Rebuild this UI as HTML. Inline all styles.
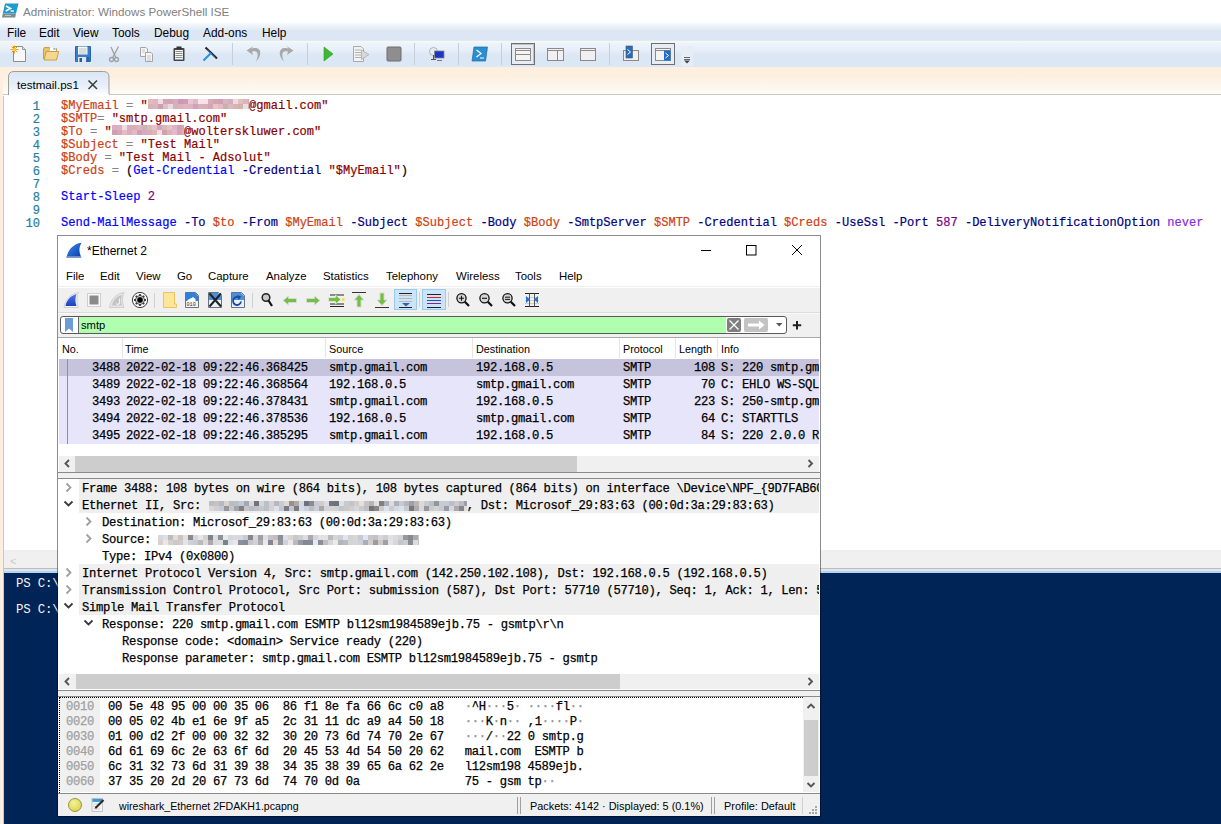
<!DOCTYPE html>
<html><head><meta charset="utf-8">
<style>
*{margin:0;padding:0;box-sizing:border-box}
html,body{width:1221px;height:824px;overflow:hidden;background:#fff;font-family:"Liberation Sans",sans-serif;position:relative}
.a{position:absolute;white-space:pre}
.mono{font-family:"Liberation Mono",monospace;-webkit-text-stroke:0.25px currentColor}
/* ISE */
#title{left:0;top:0;width:1221px;height:22px;background:#fff}
#menubar{left:0;top:22px;width:1221px;height:20px;background:linear-gradient(#fdfeff 0,#f0f5fb 3px,#dde7f4 9px,#dce6f4 18px,#e8efe8 19px)}
#toolbar{left:0;top:41px;width:1221px;height:27px;background:linear-gradient(#f6fbf7 0,#eef4fb 2px,#e9f0f9 8px,#dce7f5 14px,#dce7f5 25px,#e0eaf6 27px)}
#tabstrip{left:0;top:67px;width:1221px;height:27px;background:linear-gradient(#fdefdf 0,#fdf0e1 10px,#fefbf6 27px)}
#edline{left:3px;top:94px;width:1221px;height:1px;background:#c9c9c9}
#editor{left:4px;top:95px;width:1217px;height:455px;background:#fff}
#leftstrip{left:0;top:67px;width:3px;height:757px;background:#fdefdf}
#leftborder{left:3px;top:96px;width:1px;height:728px;background:#c8c8c8}
.ln{color:#1f7fa0}
.code{font-family:"Liberation Mono",monospace;font-size:12.06px;line-height:13px;-webkit-text-stroke:0.2px currentColor}
.v{color:#cc4214}
.s{color:#8b0000}
.c{color:#0000ff}
.p{color:#000080}
.n{color:#800080}
.k{color:#8a2be2}
.g{color:#909090}
#hscroll{left:4px;top:550px;width:1217px;height:18px;background:#f0f0f0}
#split{left:4px;top:568px;width:1217px;height:5px;background:linear-gradient(#c4beb6 0,#c4beb6 1px,#dce6ee 1px,#dce6ee 3px,#b4d4f4 3px,#b4d4f4 5px)}
#console{left:4px;top:573px;width:1217px;height:251px;background:#012456}
</style></head><body>
<div class="a" id="title"></div>
<div class="a" id="menubar"></div>
<div class="a" id="toolbar"></div>
<div class="a" id="tabstrip"></div>
<div class="a" id="edline"></div>
<div class="a" id="editor"></div>
<div class="a" id="leftstrip"></div>
<div class="a" id="leftborder"></div>
<div class="a" id="hscroll"></div>
<div class="a" id="split"></div>
<div class="a" id="console"></div>

<!-- title -->
<svg class="a" style="left:2px;top:3px" width="17" height="16" viewBox="0 0 17 16">
<path d="M3 0.5 H16.5 L14 10.5 H0.8 Z" fill="#1e9bcb"/>
<path d="M0.8 10.5 H14 L13.2 14.5 H0 Z" fill="#7c8a92"/>
<path d="M4 3 L8.5 5.5 L3.8 8" stroke="#fff" stroke-width="1.6" fill="none"/>
<path d="M8.5 8 H12" stroke="#fff" stroke-width="1.3"/>
<path d="M3 12.5 H9" stroke="#bdc6cc" stroke-width="1"/>
</svg>
<div class="a" style="left:23px;top:5px;font-size:11.65px;color:#808080">Administrator: Windows PowerShell ISE</div>


<!-- ISE menu -->
<div class="a" style="left:7px;top:25.5px;font-size:11.9px;color:#000">File</div>
<div class="a" style="left:39px;top:25.5px;font-size:11.9px;color:#000">Edit</div>
<div class="a" style="left:73px;top:25.5px;font-size:11.9px;color:#000">View</div>
<div class="a" style="left:112px;top:25.5px;font-size:11.9px;color:#000">Tools</div>
<div class="a" style="left:154px;top:25.5px;font-size:11.9px;color:#000">Debug</div>
<div class="a" style="left:203px;top:25.5px;font-size:11.9px;color:#000">Add-ons</div>
<div class="a" style="left:262px;top:25.5px;font-size:11.9px;color:#000">Help</div>

<!-- ISE toolbar icons -->
<svg class="a" style="left:0;top:41px" width="700" height="27" viewBox="0 41 700 27">
 <!-- new -->
 <path d="M13.5 46.5 H22.5 L25.5 49.5 V61.5 H13.5 Z" fill="#f8f8f8" stroke="#8c8c8c"/>
 <path d="M22.5 46.5 V49.5 H25.5" fill="#e0e0e0" stroke="#9a9a9a"/>
 <g stroke="#f8a010" stroke-width="1"><path d="M14.5 45.5 V53.5 M10.5 49.5 H18.5 M11.7 46.7 L17.3 52.3 M17.3 46.7 L11.7 52.3"/></g>
 <circle cx="14.5" cy="49.5" r="1.5" fill="#ffd040"/>
 <!-- open -->
 <path d="M43.5 58.5 V49 Q43.5 47.5 45 47.5 H49 L50.5 48.5 H56.5 V59.5 Z" fill="#e6c36a" stroke="#c49a3e" stroke-width="0.9"/>
 <rect x="50" y="48" width="6" height="3" fill="#fff"/>
 <rect x="53.5" y="48.3" width="2" height="1.2" fill="#3a8ae0"/>
 <path d="M44 60 L46.2 51.5 H58.7 L56.5 60 Z" fill="#f3d88e" stroke="#c49a3e" stroke-width="0.9"/>
 <!-- save -->
 <rect x="75" y="46" width="16" height="16" rx="1" fill="#3a7cc8"/>
 <rect x="75.5" y="46.5" width="15" height="15" rx="1" fill="none" stroke="#2a64a8" stroke-width="1"/>
 <rect x="78" y="46.5" width="9.5" height="8" fill="#f6f6f6"/>
 <path d="M79 49 H86.5 M79 51 H86.5 M79 53 H86.5" stroke="#a8b0b8" stroke-width="0.7"/>
 <rect x="78" y="57" width="8" height="5" fill="#e6e6e6"/>
 <rect x="79.5" y="58" width="2.5" height="4" fill="#2a5a98"/>
 <rect x="87" y="57" width="2.5" height="4" fill="#2a64a8"/>
 <!-- cut gray -->
 <g stroke="#a0a0a0" stroke-width="1.3" fill="none"><path d="M118.5 46.5 L112.5 58 M111 47 L116 58"/><circle cx="111.5" cy="59.5" r="2"/><circle cx="116.5" cy="59.5" r="2"/></g>
 <!-- copy gray -->
 <path d="M140.5 47.5 H146 L147.5 49 V56.5 H140.5 Z" fill="#f5f5f5" stroke="#a5a5a5"/>
 <path d="M145.5 52.5 H151 L152.5 54 V61.5 H145.5 Z" fill="#f5f5f5" stroke="#a5a5a5"/>
 <path d="M147 56 H151 M147 58 H151 M147 60 H151 M142 50 H145 M142 52 H145" stroke="#b5b5b5" stroke-width="0.7"/>
 <!-- paste clipboard -->
 <rect x="173.5" y="48" width="11" height="13" rx="1" fill="#444"/>
 <rect x="175" y="50" width="8" height="9.5" fill="#f4f4f4"/>
 <rect x="176.5" y="46.5" width="5" height="2.5" fill="#333"/>
 <path d="M175.5 51.5 H182.5 M175.5 53.5 H182.5 M175.5 55.5 H182.5 M175.5 57.5 H182.5" stroke="#777" stroke-width="0.8"/>
 <!-- squeegee -->
 <path d="M205.5 47.5 L217 58.5" stroke="#222" stroke-width="2"/>
 <path d="M211 53 L203.5 60.5" stroke="#2a8ee0" stroke-width="2"/>
 <path d="M207 49.5 L215 57.5" stroke="#2a8ee0" stroke-width="1"/>
 <!-- sep -->
 <path d="M232.5 43 V65" stroke="#c5cfdc"/>
 <!-- undo gray -->
 <path d="M256 61.5 C262 56 262 47 254 48 L251.5 48.5 L253.5 46 L246.5 50.5 L253 55 L252 51.5 L254 51.2 C258.5 51 258.5 56 256 61.5Z" fill="#a9a9a9"/>
 <!-- redo gray -->
 <path d="M284 61.5 C278 56 278 47 286 48 L288.5 48.5 L286.5 46 L293.5 50.5 L287 55 L288 51.5 L286 51.2 C281.5 51 281.5 56 284 61.5Z" fill="#a9a9a9"/>
 <path d="M307.5 43 V65" stroke="#c5cfdc"/>
 <!-- run -->
 <path d="M324 47 L333 54 L324 61 Z" fill="#3cb832" stroke="#2a9a22" stroke-width="0.6"/>
 <!-- run selection -->
 <path d="M353.5 46.5 H361 L363.5 49 V61.5 H353.5 Z" fill="#f3f3f3" stroke="#a8a8a8"/>
 <path d="M355 50 H361 M355 52.5 H361 M355 55 H361 M355 57.5 H361" stroke="#a0a0a0" stroke-width="0.8"/>
 <path d="M361.5 50 L369 54.5 L361.5 59.5 Z" fill="#d8d8d8" stroke="#a5a5a5" stroke-width="0.7"/>
 <!-- stop -->
 <rect x="387" y="47" width="14" height="14" rx="1" fill="#8e8e8e" stroke="#6e6e6e"/>
 <path d="M414.5 43 V65" stroke="#c5cfdc"/>
 <!-- remote -->
 <circle cx="433.5" cy="51.5" r="4" fill="#e6eef2" stroke="#9aa8b0" stroke-width="0.8"/>
 <path d="M433.5 55 V59 M431 59.5 H436" stroke="#555" stroke-width="1"/>
 <rect x="434.5" y="51" width="9.5" height="7" fill="#1a34c8" stroke="#888" stroke-width="0.8"/>
 <path d="M437 60.5 H442" stroke="#777" stroke-width="1"/>
 <path d="M458.5 43 V65" stroke="#c5cfdc"/>
 <!-- PS -->
 <path d="M474 47 H487.5 L485.5 61 H472 Z" fill="#2a8fd0" stroke="#1a6aa8" stroke-width="0.7"/>
 <path d="M476.5 50 L481 53.5 L476.5 57" stroke="#fff" stroke-width="1.3" fill="none"/>
 <path d="M480 58 H484" stroke="#fff" stroke-width="1"/>
 <path d="M501.5 43 V65" stroke="#c5cfdc"/>
 <!-- layout 1 pressed -->
 <rect x="511.5" y="43.5" width="23" height="21" fill="#e8edf3" stroke="#707070"/>
 <path d="M512.5 44.5 H533.5 V63.5" stroke="#c0c0c0" fill="none"/>
 <rect x="515.5" y="48.5" width="15" height="12" fill="#f4f4f4" stroke="#8a8a8a"/>
 <path d="M515.5 50.5 H530.5 M515.5 54.5 H530.5" stroke="#8a8a8a"/>
 <!-- layout 2 -->
 <rect x="547.5" y="48.5" width="16" height="12" fill="#f0f0f0" stroke="#8a8a8a"/>
 <path d="M547.5 50.5 H563.5 M557.5 50.5 V60.5" stroke="#8a8a8a"/>
 <!-- layout 3 -->
 <rect x="580.5" y="48.5" width="15" height="12" fill="#f0f0f0" stroke="#8a8a8a"/>
 <path d="M580.5 50.5 H595.5" stroke="#8a8a8a"/>
 <path d="M609.5 43 V65" stroke="#c5cfdc"/>
 <!-- show script pane top -->
 <rect x="623.5" y="50.5" width="15" height="10" fill="#f0f0f0" stroke="#8a8a8a"/>
 <rect x="626" y="46" width="6.5" height="12" fill="#1f6fc8" stroke="#555" stroke-width="0.6"/>
 <path d="M627.5 49.5 L630.5 52 L627.5 54.5" stroke="#fff" stroke-width="1" fill="none"/>
 <!-- pressed show script pane right -->
 <rect x="651.5" y="43.5" width="23" height="21" fill="#e8edf3" stroke="#707070"/>
 <rect x="655.5" y="48.5" width="15" height="12" fill="#f4f4f4" stroke="#8a8a8a"/>
 <path d="M655.5 50.5 H670.5" stroke="#8a8a8a"/>
 <rect x="664" y="50.5" width="6.5" height="10" fill="#1f6fc8"/>
 <path d="M665.5 53 L668.5 55.5 L665.5 58" stroke="#fff" stroke-width="1" fill="none"/>
 <!-- overflow -->
 <rect x="681" y="46" width="12" height="20" fill="#e6edf7"/>
 <path d="M684 57.5 H690 M684 59.5 H690" stroke="#444" stroke-width="0.8"/>
 <path d="M684 60.5 L687 63.5 L690 60.5 Z" fill="#444"/>
</svg>

<!-- tab -->
<svg class="a" style="left:8px;top:71px" width="102" height="24" viewBox="0 0 102 24">
 <defs><linearGradient id="tg" x1="0" y1="0" x2="0" y2="1"><stop offset="0" stop-color="#dce7f5"/><stop offset="0.55" stop-color="#e6eef8"/><stop offset="1" stop-color="#fcfdff"/></linearGradient></defs>
 <path d="M0.5 24 V6 Q0.5 0.5 6 0.5 H95.5 Q101 0.5 101 6 V24" fill="url(#tg)" stroke="#9d9d9d"/>
 <path d="M80.5 9.5 L89 18 M89 9.5 L80.5 18" stroke="#3c3c3c" stroke-width="1.5"/>
</svg>
<div class="a" style="left:17px;top:78px;font-size:11.6px;color:#000">testmail.ps1</div>
<div class="a" style="left:9px;top:94px;width:100px;height:1px;background:#fcfdff"></div>

<!-- code -->
<div class="a code ln" style="left:18px;top:101px;width:22px;text-align:right">1
2
3
4
5
6
7
8
9
10</div>
<div class="a code" style="left:61px;top:100px"><span class="v">$MyEmail</span> <span style="color:#858585">=</span> <span class="s">"<span style="color:transparent">xxxxxxxxxxxxxx</span>@gmail.com"</span>
<span class="v">$SMTP</span><span style="color:#858585">=</span> <span class="s">"smtp.gmail.com"</span>
<span class="v">$To</span> <span style="color:#858585">=</span> <span class="s">"<span style="color:transparent">xxxxxxxxxx</span>@wolterskluwer.com"</span>
<span class="v">$Subject</span> <span style="color:#858585">=</span> <span class="s">"Test Mail"</span>
<span class="v">$Body</span> <span style="color:#858585">=</span> <span class="s">"Test Mail - Adsolut"</span>
<span class="v">$Creds</span> <span style="color:#858585">=</span> (<span class="c">Get-Credential</span> <span class="p">-Credential</span> <span class="s">"$MyEmail"</span>)

<span class="c">Start-Sleep</span> <span class="n">2</span>

<span class="c">Send-MailMessage</span> <span class="p">-To</span> <span class="v">$to</span> <span class="p">-From</span> <span class="v">$MyEmail</span> <span class="p">-Subject</span> <span class="v">$Subject</span> <span class="p">-Body</span> <span class="v">$Body</span> <span class="p">-SmtpServer</span> <span class="v">$SMTP</span> <span class="p">-Credential</span> <span class="v">$Creds</span> <span class="p">-UseSsl</span> <span class="p">-Port</span> <span class="n">587</span> <span class="p">-DeliveryNotificationOption</span> <span class="k">never</span></div>
<!-- blur blocks -->
<svg class="a" style="left:148px;top:99px" width="101" height="10" viewBox="0 0 101 10" shape-rendering="crispEdges"><rect x="0" y="0" width="5" height="5" fill="#e4bbbc"/><rect x="5" y="0" width="5" height="5" fill="#e4b2c2"/><rect x="10" y="0" width="5" height="5" fill="#efdde3"/><rect x="15" y="0" width="5" height="5" fill="#d4a2c1"/><rect x="20" y="0" width="5" height="5" fill="#d0a7af"/><rect x="25" y="0" width="5" height="5" fill="#d9aac4"/><rect x="30" y="0" width="5" height="5" fill="#cd98b5"/><rect x="35" y="0" width="5" height="5" fill="#d29cb4"/><rect x="40" y="0" width="5" height="5" fill="#e6c6d0"/><rect x="45" y="0" width="5" height="5" fill="#dbb9c5"/><rect x="50" y="0" width="5" height="5" fill="#f5e3e9"/><rect x="55" y="0" width="5" height="5" fill="#f4e2e8"/><rect x="60" y="0" width="5" height="5" fill="#d2afb7"/><rect x="65" y="0" width="5" height="5" fill="#d3a4ac"/><rect x="70" y="0" width="5" height="5" fill="#d29eba"/><rect x="75" y="0" width="5" height="5" fill="#d9b2c7"/><rect x="80" y="0" width="5" height="5" fill="#d2b0b8"/><rect x="85" y="0" width="5" height="5" fill="#ecdae0"/><rect x="90" y="0" width="5" height="5" fill="#dfc1ba"/><rect x="95" y="0" width="5" height="5" fill="#d7b7bc"/><rect x="100" y="0" width="1" height="5" fill="#d6a9ae"/><rect x="0" y="5" width="5" height="5" fill="#dcafb4"/><rect x="5" y="5" width="5" height="5" fill="#d5b7b8"/><rect x="10" y="5" width="5" height="5" fill="#cd9eae"/><rect x="15" y="5" width="5" height="5" fill="#dfc1bf"/><rect x="20" y="5" width="5" height="5" fill="#ead8de"/><rect x="25" y="5" width="5" height="5" fill="#d3b2ba"/><rect x="30" y="5" width="5" height="5" fill="#dbb2b9"/><rect x="35" y="5" width="5" height="5" fill="#ddb7bd"/><rect x="40" y="5" width="5" height="5" fill="#e4aec7"/><rect x="45" y="5" width="5" height="5" fill="#cea3ba"/><rect x="50" y="5" width="5" height="5" fill="#ddacc0"/><rect x="55" y="5" width="5" height="5" fill="#d7b1af"/><rect x="60" y="5" width="5" height="5" fill="#d6a3ba"/><rect x="65" y="5" width="5" height="5" fill="#e6c6c0"/><rect x="70" y="5" width="5" height="5" fill="#e3bcc2"/><rect x="75" y="5" width="5" height="5" fill="#ceaea9"/><rect x="80" y="5" width="5" height="5" fill="#d9bac0"/><rect x="85" y="5" width="5" height="5" fill="#d8b2b8"/><rect x="90" y="5" width="5" height="5" fill="#d1b2ab"/><rect x="95" y="5" width="5" height="5" fill="#efdde3"/><rect x="100" y="5" width="1" height="5" fill="#d3b1af"/></svg>
<svg class="a" style="left:112px;top:125px" width="72" height="10" viewBox="0 0 72 10" shape-rendering="crispEdges"><rect x="0" y="0" width="5" height="5" fill="#e1aac2"/><rect x="5" y="0" width="5" height="5" fill="#dab1c4"/><rect x="10" y="0" width="5" height="5" fill="#eedce2"/><rect x="15" y="0" width="5" height="5" fill="#dbaac4"/><rect x="20" y="0" width="5" height="5" fill="#dbaeb3"/><rect x="25" y="0" width="5" height="5" fill="#dcb6c1"/><rect x="30" y="0" width="5" height="5" fill="#d1b0b3"/><rect x="35" y="0" width="5" height="5" fill="#debbb8"/><rect x="40" y="0" width="5" height="5" fill="#e8c0d1"/><rect x="45" y="0" width="5" height="5" fill="#d5a7b2"/><rect x="50" y="0" width="5" height="5" fill="#d8b8bb"/><rect x="55" y="0" width="5" height="5" fill="#e2c3c7"/><rect x="60" y="0" width="5" height="5" fill="#e3b0c9"/><rect x="65" y="0" width="5" height="5" fill="#d59fad"/><rect x="70" y="0" width="2" height="5" fill="#d7a5c0"/><rect x="0" y="5" width="5" height="5" fill="#cda0aa"/><rect x="5" y="5" width="5" height="5" fill="#d7a4bd"/><rect x="10" y="5" width="5" height="5" fill="#e7b9c1"/><rect x="15" y="5" width="5" height="5" fill="#d8afbe"/><rect x="20" y="5" width="5" height="5" fill="#e4b9c7"/><rect x="25" y="5" width="5" height="5" fill="#d29eb2"/><rect x="30" y="5" width="5" height="5" fill="#d7a9c1"/><rect x="35" y="5" width="5" height="5" fill="#d2aeb5"/><rect x="40" y="5" width="5" height="5" fill="#dcb5b4"/><rect x="45" y="5" width="5" height="5" fill="#f2e0e6"/><rect x="50" y="5" width="5" height="5" fill="#d2a1ae"/><rect x="55" y="5" width="5" height="5" fill="#dab3b5"/><rect x="60" y="5" width="5" height="5" fill="#e8b6ce"/><rect x="65" y="5" width="5" height="5" fill="#cda9b6"/><rect x="70" y="5" width="2" height="5" fill="#e0aec9"/></svg>

<!-- ISE horizontal scroll area (left of wireshark) -->
<div class="a" style="left:10px;top:555px;font-size:11px;color:#c8c8c8">&lt;</div>
<!-- console text -->
<div class="a" style="left:16px;top:572px;font-family:'Liberation Mono',monospace;font-size:12.4px;letter-spacing:-0.2px;line-height:25.5px;color:#f5f5f5">PS C:\
PS C:\</div>


<!-- ================= WIRESHARK ================= -->
<div class="a" style="left:57px;top:235px;width:764px;height:582px;background:#f0f0f0;background-clip:padding-box;border:1px solid rgba(0,0,0,0.45)"></div>
<div class="a" style="left:58px;top:236px;width:762px;height:52px;background:#fff"></div>
<div class="a" style="left:58px;top:286px;width:762px;height:1px;background:#efefef"></div>
<!-- title -->
<svg class="a" style="left:66px;top:242px" width="17" height="17" viewBox="0 0 17 17">
 <defs><linearGradient id="sh" x1="0" y1="0" x2="1" y2="1"><stop offset="0" stop-color="#3d8bf0"/><stop offset="1" stop-color="#0a3aa8"/></linearGradient></defs>
 <path d="M0.5 15.5 C2 8 7 2 15.5 0.8 C13 5 12.5 10 15.5 15.5 Z" fill="url(#sh)"/>
 <path d="M0.5 14 H15 V16 H0.5Z" fill="#7d9bc8" opacity="0.8"/>
</svg>
<div class="a" style="left:87px;top:244px;font-size:12px;color:#000">*Ethernet 2</div>
<svg class="a" style="left:690px;top:240px" width="120" height="20" viewBox="690 240 120 20">
 <path d="M701 250.5 H711" stroke="#000" stroke-width="1"/>
 <rect x="746.5" y="245.5" width="9.5" height="9.5" fill="none" stroke="#000" stroke-width="1"/>
 <path d="M792 245 L802 255 M802 245 L792 255" stroke="#000" stroke-width="1"/>
</svg>
<!-- menu -->
<div class="a" style="left:66px;top:270px;font-size:11.4px;color:#000">File</div>
<div class="a" style="left:100px;top:270px;font-size:11.4px;color:#000">Edit</div>
<div class="a" style="left:136px;top:270px;font-size:11.4px;color:#000">View</div>
<div class="a" style="left:177px;top:270px;font-size:11.4px;color:#000">Go</div>
<div class="a" style="left:208px;top:270px;font-size:11.4px;color:#000">Capture</div>
<div class="a" style="left:266px;top:270px;font-size:11.4px;color:#000">Analyze</div>
<div class="a" style="left:323px;top:270px;font-size:11.4px;color:#000">Statistics</div>
<div class="a" style="left:386px;top:270px;font-size:11.4px;color:#000">Telephony</div>
<div class="a" style="left:456px;top:270px;font-size:11.4px;color:#000">Wireless</div>
<div class="a" style="left:515px;top:270px;font-size:11.4px;color:#000">Tools</div>
<div class="a" style="left:559px;top:270px;font-size:11.4px;color:#000">Help</div>

<!-- wireshark toolbar -->
<svg class="a" style="left:58px;top:288px" width="500" height="24" viewBox="58 288 500 24">
 <defs>
  <linearGradient id="bl" x1="0" y1="0" x2="0" y2="1"><stop offset="0" stop-color="#4a7ae8"/><stop offset="1" stop-color="#1f3fc0"/></linearGradient>
 </defs>
 <!-- start shark -->
 <path d="M64 307.5 C65 300 70 294 78.5 292.5 C76.5 297 76.5 302 78.5 307.5 Z" fill="#f6f6f6" stroke="#c8c8c8" stroke-width="0.8"/>
 <path d="M65.5 306 C66.5 300 71 295.5 76.5 294 C75 298 75 302 76.5 306 Z" fill="url(#bl)"/>
 <!-- stop -->
 <rect x="87.5" y="293.5" width="13" height="13" fill="#fafafa" stroke="#cfcfcf"/>
 <rect x="89.5" y="295.5" width="9" height="9" fill="#8a8a8a"/>
 <!-- restart gray -->
 <path d="M109.5 307.5 C110.5 300 115.5 294 124 292.5 C122 297 122 302 124 307.5 Z" fill="#e6e6e6" stroke="#c8c8c8" stroke-width="0.8"/>
 <path d="M112 305.5 C113 300 117 296 122 295 C120.8 298.5 120.8 302 122 305.5 Z" fill="#c4c4c4"/>
 <path d="M119.5 298.5 V303 A2 2 0 0 1 116 303.5" stroke="#f4f4f4" stroke-width="1.2" fill="none"/>
 <!-- options gear -->
 <circle cx="140" cy="300" r="7.6" fill="#fff" stroke="#3a3a3a" stroke-width="1"/>
 <circle cx="140" cy="300" r="4.8" fill="#3a3a3a"/>
 <g stroke="#3a3a3a" stroke-width="1.8"><path d="M140 294 V306 M134 300 H146 M135.8 295.8 L144.2 304.2 M144.2 295.8 L135.8 304.2"/></g>
 <circle cx="140" cy="300" r="2.4" fill="#000"/>
 <circle cx="140" cy="300" r="3.6" fill="none" stroke="#fff" stroke-width="0.8"/>
 <path d="M154.5 293 V308" stroke="#d0d0d0"/>
 <!-- folder -->
 <path d="M163.5 292.5 H174.5 V304 H176.5 V307.5 H163.5 Z" fill="#fde59a" stroke="#e8c050" stroke-width="0.9"/>
 <!-- file 010 -->
 <path d="M185.5 292.5 H195.5 L198.5 295.5 V307.5 H185.5 Z" fill="#f2f6fb" stroke="#5a6470" stroke-width="0.9"/>
 <path d="M186 292.5 H195 L198 296 V301 H186 Z" fill="#2f80d8"/>
 <path d="M187 301 C189 298 191 299 193 297 L195.5 299 V301 Z" fill="#fff"/>
 <text x="186.5" y="306.3" font-family="Liberation Mono" font-size="5.2" fill="#333">010</text>
 <!-- close file -->
 <path d="M208.5 292.5 H218.5 L221.5 295.5 V307.5 H208.5 Z" fill="#e8f0f8" stroke="#5a6470" stroke-width="0.9"/>
 <path d="M209 293 H218 L221 296 V300 H209 Z" fill="#4a90d8"/>
 <path d="M209.5 293.5 L221 306.5 M221 293.5 L209.5 306.5" stroke="#222" stroke-width="2"/>
 <!-- reload -->
 <path d="M231.5 292.5 H241.5 L244.5 295.5 V307.5 H231.5 Z" fill="#e8f0f8" stroke="#5a6470" stroke-width="0.9"/>
 <path d="M232 293 H241 L244 296 V300 H232 Z" fill="#4a90d8"/>
 <path d="M241 301.5 A4 4 0 1 1 239 297.5" stroke="#1a4aa8" stroke-width="1.8" fill="none"/>
 <path d="M237 295 L241.5 296.5 L238.5 300 Z" fill="#1a4aa8"/>
 <path d="M252.5 293 V308" stroke="#d0d0d0"/>
 <!-- find -->
 <circle cx="266" cy="297.5" r="3.8" fill="#c8c8c8" stroke="#222" stroke-width="1.5"/>
 <path d="M268.5 300.5 L272 306" stroke="#111" stroke-width="2.2"/>
 <!-- back -->
 <path d="M283 300.5 L288.5 296 V298.5 H296.5 V302.5 H288.5 V305 Z" fill="#72c040" stroke="#d8d8d8" stroke-width="0.9"/>
 <!-- forward -->
 <path d="M320 300.5 L314.5 296 V298.5 H306.5 V302.5 H314.5 V305 Z" fill="#72c040" stroke="#d8d8d8" stroke-width="0.9"/>
 <!-- go to packet -->
 <path d="M330 295 H344 M330 304 H344 M330 306.5 H344" stroke="#222" stroke-width="1"/>
 <path d="M342 298 H344.5 V301 H342Z" fill="#f0e040"/>
 <path d="M328.5 297.5 H335.5 V295 L341 299.5 L335.5 304 V301.5 H328.5 Z" fill="#72c040" stroke="#e6e6e6" stroke-width="0.8"/>
 <!-- first -->
 <path d="M352 292.5 H366" stroke="#333" stroke-width="1"/>
 <path d="M359 294.5 L364 300 H361 V307 H357 V300 H354 Z" fill="#72c040" stroke="#d6d6d6" stroke-width="0.9"/>
 <!-- last -->
 <path d="M375 307.5 H389" stroke="#333" stroke-width="1"/>
 <path d="M382 305.5 L387 300 H384 V293 H380 V300 H377 Z" fill="#72c040" stroke="#d6d6d6" stroke-width="0.9"/>
 <!-- autoscroll pressed -->
 <rect x="394.5" y="289.5" width="22" height="20" fill="#cce4f7" stroke="#99c9ef"/>
 <path d="M399 295.5 H412 M399 298.5 H412 M399 301.5 H412" stroke="#b8b8b8" stroke-width="1"/>
 <path d="M399 293.5 H412 M399 307.5 H412" stroke="#222" stroke-width="1"/>
 <path d="M402 303 H410 L406 306.5 Z" fill="#2a64b8"/>
 <path d="M419.5 292 V307" stroke="#d0d0d0"/>
 <!-- colorize pressed -->
 <rect x="422.5" y="289.5" width="23" height="20" fill="#cce4f7" stroke="#99c9ef"/>
 <path d="M427 294.5 H441 M427 307.5 H441" stroke="#222" stroke-width="1"/>
 <path d="M427 297.5 H441" stroke="#e02020" stroke-width="1"/>
 <path d="M427 300.5 H441" stroke="#2050d0" stroke-width="1"/>
 <path d="M427 303.5 H441" stroke="#70308a" stroke-width="1"/>
 <path d="M448.5 292 V307" stroke="#d0d0d0"/>
 <!-- zoom in -->
 <circle cx="461.5" cy="298.3" r="4.6" fill="#d6d6d6" stroke="#111" stroke-width="1.3"/>
 <path d="M464.8 301.8 L469 306" stroke="#111" stroke-width="2.2"/>
 <path d="M459 298.3 H464 M461.5 295.8 V300.8" stroke="#111" stroke-width="1.1"/>
 <!-- zoom out -->
 <circle cx="484.5" cy="298.3" r="4.6" fill="#d6d6d6" stroke="#111" stroke-width="1.3"/>
 <path d="M487.8 301.8 L492 306" stroke="#111" stroke-width="2.2"/>
 <path d="M482 298.3 H487" stroke="#111" stroke-width="1.1"/>
 <!-- zoom reset -->
 <circle cx="507.5" cy="298.3" r="4.6" fill="#d6d6d6" stroke="#111" stroke-width="1.3"/>
 <path d="M510.8 301.8 L515 306" stroke="#111" stroke-width="2.2"/>
 <path d="M505 297.2 H510 M505 299.4 H510" stroke="#111" stroke-width="1"/>
 <!-- resize columns -->
 <path d="M525 293.5 H539 M525 306.5 H539" stroke="#222" stroke-width="1"/>
 <path d="M525 297.5 H539 M525 300.5 H539 M525 303.5 H539" stroke="#c8c8c8" stroke-width="0.8"/>
 <path d="M529.5 293.5 V306.5 M534.5 293.5 V306.5" stroke="#555" stroke-width="1"/>
 <path d="M526 296 L530 299.5 L526 303 Z M538 296 L534 299.5 L538 303 Z" fill="#2a70d0"/>
</svg>
<!-- toolbar line -->
<div class="a" style="left:58px;top:312px;width:762px;height:1px;background:#dcdcdc"></div>
<div class="a" style="left:58px;top:313px;width:762px;height:1px;background:#fafafa"></div>

<!-- filter -->
<div class="a" style="left:60px;top:316px;width:727px;height:18px;background:#fff;border:1px solid #5a5a5a;border-radius:3px"></div>
<div class="a" style="left:78px;top:317px;width:1px;height:16px;background:#6a6a6a"></div><div class="a" style="left:79px;top:317px;width:647px;height:16px;background:#afffaf"></div>
<svg class="a" style="left:64px;top:318px" width="10" height="15" viewBox="0 0 10 15"><path d="M1 0 H9 V14 L5 10.5 L1 14 Z" fill="#6d9bd8"/></svg>
<div class="a" style="left:81px;top:319px;font-size:11.2px;color:#000">smtp</div>
<svg class="a" style="left:726px;top:317px" width="96" height="17" viewBox="726 317 96 17">
 <rect x="727" y="318" width="14" height="14" rx="2" fill="#7f7f7f"/>
 <path d="M729.5 320.5 L738.5 329.5 M738.5 320.5 L729.5 329.5" stroke="#fff" stroke-width="1.3"/>
 <rect x="744" y="318" width="24" height="14" rx="2" fill="#c3c3c3"/>
 <path d="M748 323.5 H759 V320.5 L764.5 325 L759 329.5 V326.5 H748 Z" fill="#fff"/>
 <path d="M776 323 H782.5 L779.25 326.5 Z" fill="#555"/>
 <path d="M797 321 V329.5 M792.8 325.2 H801.2" stroke="#222" stroke-width="2"/>
</svg>

<!-- packet list -->
<div class="a" style="left:58px;top:337px;width:762px;height:136px;background:#fff;border-top:1px solid #a9a9a9;border-bottom:1px solid #8a8a8a"></div>
<div class="a" style="left:122px;top:338px;width:1px;height:20px;background:#e5e5e5"></div>
<div class="a" style="left:325px;top:338px;width:1px;height:20px;background:#e5e5e5"></div>
<div class="a" style="left:472px;top:338px;width:1px;height:20px;background:#e5e5e5"></div>
<div class="a" style="left:619px;top:338px;width:1px;height:20px;background:#e5e5e5"></div>
<div class="a" style="left:675px;top:338px;width:1px;height:20px;background:#e5e5e5"></div>
<div class="a" style="left:717px;top:338px;width:1px;height:20px;background:#e5e5e5"></div>
<div class="a" style="left:62px;top:343px;font-size:10.8px;color:#000">No.</div>
<div class="a" style="left:125px;top:343px;font-size:10.8px;color:#000">Time</div>
<div class="a" style="left:329px;top:343px;font-size:10.8px;color:#000">Source</div>
<div class="a" style="left:476px;top:343px;font-size:10.8px;color:#000">Destination</div>
<div class="a" style="left:623px;top:343px;font-size:10.8px;color:#000">Protocol</div>
<div class="a" style="left:679px;top:343px;font-size:10.8px;color:#000">Length</div>
<div class="a" style="left:721px;top:343px;font-size:10.8px;color:#000">Info</div>
<div class="a" style="left:59px;top:359px;width:760px;height:17px;background:#c6c4dc"></div>
<div class="a" style="left:59px;top:376px;width:760px;height:68px;background:#e6e5fa"></div>
<div class="a" style="left:67px;top:359px;width:1px;height:85px;background:#8c9198"></div>
<div class="a" style="left:59px;top:359px;width:760px;height:85px;overflow:hidden"><div class="a mono" style="left:1px;top:1px;font-size:12.2px;letter-spacing:-0.32px;line-height:17px;color:#000;width:60px;text-align:right">3488
3489
3493
3494
3495</div><div class="a mono" style="left:67px;top:1px;font-size:12.2px;letter-spacing:-0.32px;line-height:17px;color:#000">2022-02-18 09:22:46.368425
2022-02-18 09:22:46.368564
2022-02-18 09:22:46.378431
2022-02-18 09:22:46.378536
2022-02-18 09:22:46.385295</div><div class="a mono" style="left:270px;top:1px;font-size:12.2px;letter-spacing:-0.32px;line-height:17px;color:#000">smtp.gmail.com
192.168.0.5
smtp.gmail.com
192.168.0.5
smtp.gmail.com</div><div class="a mono" style="left:417px;top:1px;font-size:12.2px;letter-spacing:-0.32px;line-height:17px;color:#000">192.168.0.5
smtp.gmail.com
192.168.0.5
smtp.gmail.com
192.168.0.5</div><div class="a mono" style="left:564px;top:1px;font-size:12.2px;letter-spacing:-0.32px;line-height:17px;color:#000">SMTP
SMTP
SMTP
SMTP
SMTP</div><div class="a mono" style="left:596px;top:1px;font-size:12.2px;letter-spacing:-0.32px;line-height:17px;color:#000;width:60px;text-align:right">108
70
223
64
84</div><div class="a mono" style="left:662px;top:1px;font-size:12.2px;letter-spacing:-0.32px;line-height:17px;color:#000">S: 220 smtp.gmail.com ESMTP
C: EHLO WS-SQL
S: 250-smtp.gmail.com
C: STARTTLS
S: 220 2.0.0 Ready</div></div>
<!-- packet list hscroll -->
<div class="a" style="left:59px;top:456px;width:760px;height:16px;background:#f0f0f0"></div>
<div class="a" style="left:75px;top:456px;width:502px;height:16px;background:#cdcdcd"></div>
<svg class="a" style="left:59px;top:456px" width="760" height="16" viewBox="59 456 760 16">
 <path d="M69 460 L65.5 463.5 L69 467" stroke="#555" stroke-width="1.9" fill="none"/>
 <path d="M808.5 460 L812 463.5 L808.5 467" stroke="#555" stroke-width="1.9" fill="none"/>
</svg>
<!-- details pane -->
<div class="a" style="left:58px;top:478px;width:762px;height:213px;background:#fff;border-top:1px solid #8a8a8a;border-bottom:1px solid #8a8a8a"></div>
<div class="a" style="left:79px;top:479px;width:740px;height:34px;background:#efefef"></div>
<div class="a" style="left:79px;top:564px;width:740px;height:51px;background:#efefef"></div>
<div class="a" style="left:59px;top:481px;width:760px;height:188px;overflow:hidden"><div class="a mono" style="left:23px;top:0px;font-size:12.2px;letter-spacing:-0.32px;line-height:17px;color:#000">Frame 3488: 108 bytes on wire (864 bits), 108 bytes captured (864 bits) on interface \Device\NPF_{9D7FAB60-</div>
<div class="a mono" style="left:23px;top:17px;font-size:12.2px;letter-spacing:-0.32px;line-height:17px;color:#000">Ethernet II, Src: <span style="color:transparent">xxxxxxxxxxxxxxxxxxxxxxxxxxxxxxxxxxxxx</span>, Dst: Microsof_29:83:63 (00:0d:3a:29:83:63)</div>
<div class="a mono" style="left:43px;top:34px;font-size:12.2px;letter-spacing:-0.32px;line-height:17px;color:#000">Destination: Microsof_29:83:63 (00:0d:3a:29:83:63)</div>
<div class="a mono" style="left:43px;top:51px;font-size:12.2px;letter-spacing:-0.32px;line-height:17px;color:#000">Source: <span style="color:transparent">xxxxxxxxxxxxxxxxxxxxxxxxxxxxxxxxxxxxx</span></div>
<div class="a mono" style="left:43px;top:68px;font-size:12.2px;letter-spacing:-0.32px;line-height:17px;color:#000">Type: IPv4 (0x0800)</div>
<div class="a mono" style="left:23px;top:85px;font-size:12.2px;letter-spacing:-0.32px;line-height:17px;color:#000">Internet Protocol Version 4, Src: smtp.gmail.com (142.250.102.108), Dst: 192.168.0.5 (192.168.0.5)</div>
<div class="a mono" style="left:23px;top:102px;font-size:12.2px;letter-spacing:-0.32px;line-height:17px;color:#000">Transmission Control Protocol, Src Port: submission (587), Dst Port: 57710 (57710), Seq: 1, Ack: 1, Len: 5</div>
<div class="a mono" style="left:23px;top:119px;font-size:12.2px;letter-spacing:-0.32px;line-height:17px;color:#000">Simple Mail Transfer Protocol</div>
<div class="a mono" style="left:43px;top:136px;font-size:12.2px;letter-spacing:-0.32px;line-height:17px;color:#000">Response: 220 smtp.gmail.com ESMTP bl12sm1984589ejb.75 - gsmtp\r\n</div>
<div class="a mono" style="left:63px;top:153px;font-size:12.2px;letter-spacing:-0.32px;line-height:17px;color:#000">Response code: &lt;domain&gt; Service ready (220)</div>
<div class="a mono" style="left:63px;top:170px;font-size:12.2px;letter-spacing:-0.32px;line-height:17px;color:#000">Response parameter: smtp.gmail.com ESMTP bl12sm1984589ejb.75 - gsmtp</div>
</div>
<svg class="a" style="left:209px;top:501px" width="258" height="10" viewBox="0 0 258 10" shape-rendering="crispEdges"><rect x="0" y="0" width="5" height="5" fill="#b9bfc9"/><rect x="5" y="0" width="5" height="5" fill="#c9c1be"/><rect x="10" y="0" width="5" height="5" fill="#b7b8bf"/><rect x="15" y="0" width="5" height="5" fill="#d6d3d0"/><rect x="20" y="0" width="5" height="5" fill="#bebbbf"/><rect x="25" y="0" width="5" height="5" fill="#bbc0c8"/><rect x="30" y="0" width="5" height="5" fill="#c1c9d8"/><rect x="35" y="0" width="5" height="5" fill="#a3a8b3"/><rect x="40" y="0" width="5" height="5" fill="#dcd7d7"/><rect x="45" y="0" width="5" height="5" fill="#707378"/><rect x="50" y="0" width="5" height="5" fill="#d1d5e0"/><rect x="55" y="0" width="5" height="5" fill="#b8c0c8"/><rect x="60" y="0" width="5" height="5" fill="#d8d3d1"/><rect x="65" y="0" width="5" height="5" fill="#b8b7be"/><rect x="70" y="0" width="5" height="5" fill="#c7cbcf"/><rect x="75" y="0" width="5" height="5" fill="#e0d8d2"/><rect x="80" y="0" width="5" height="5" fill="#96908c"/><rect x="85" y="0" width="5" height="5" fill="#b1aaa4"/><rect x="90" y="0" width="5" height="5" fill="#d3d8e5"/><rect x="95" y="0" width="5" height="5" fill="#6c717e"/><rect x="100" y="0" width="5" height="5" fill="#908a89"/><rect x="105" y="0" width="5" height="5" fill="#cacad1"/><rect x="110" y="0" width="5" height="5" fill="#d4ccc8"/><rect x="115" y="0" width="5" height="5" fill="#d9dde7"/><rect x="120" y="0" width="5" height="5" fill="#74757c"/><rect x="125" y="0" width="5" height="5" fill="#6e727b"/><rect x="130" y="0" width="5" height="5" fill="#e0e1e3"/><rect x="135" y="0" width="5" height="5" fill="#c6c9d2"/><rect x="140" y="0" width="5" height="5" fill="#c6c3c5"/><rect x="145" y="0" width="5" height="5" fill="#d3cdc7"/><rect x="150" y="0" width="5" height="5" fill="#e7dfd8"/><rect x="155" y="0" width="5" height="5" fill="#c4c4c4"/><rect x="160" y="0" width="5" height="5" fill="#bab5b4"/><rect x="165" y="0" width="5" height="5" fill="#e2e0df"/><rect x="170" y="0" width="5" height="5" fill="#7f7f7f"/><rect x="175" y="0" width="5" height="5" fill="#a9afb9"/><rect x="180" y="0" width="5" height="5" fill="#e0dbda"/><rect x="185" y="0" width="5" height="5" fill="#adb2b9"/><rect x="190" y="0" width="5" height="5" fill="#cac9d0"/><rect x="195" y="0" width="5" height="5" fill="#b7b7bc"/><rect x="200" y="0" width="5" height="5" fill="#99a1b1"/><rect x="205" y="0" width="5" height="5" fill="#bcb6b1"/><rect x="210" y="0" width="5" height="5" fill="#dcd8dc"/><rect x="215" y="0" width="5" height="5" fill="#c9cbcf"/><rect x="220" y="0" width="5" height="5" fill="#b8c0c9"/><rect x="225" y="0" width="5" height="5" fill="#9096a2"/><rect x="230" y="0" width="5" height="5" fill="#cbcac9"/><rect x="235" y="0" width="5" height="5" fill="#c3cbd7"/><rect x="240" y="0" width="5" height="5" fill="#b8bfca"/><rect x="245" y="0" width="5" height="5" fill="#cdc9c6"/><rect x="250" y="0" width="5" height="5" fill="#babbc4"/><rect x="255" y="0" width="3" height="5" fill="#9b9fa9"/><rect x="0" y="5" width="5" height="5" fill="#d8d7d9"/><rect x="5" y="5" width="5" height="5" fill="#d3cfd0"/><rect x="10" y="5" width="5" height="5" fill="#c2c9d8"/><rect x="15" y="5" width="5" height="5" fill="#959698"/><rect x="20" y="5" width="5" height="5" fill="#c1c6d1"/><rect x="25" y="5" width="5" height="5" fill="#a2a3ab"/><rect x="30" y="5" width="5" height="5" fill="#867e7e"/><rect x="35" y="5" width="5" height="5" fill="#c5c5c6"/><rect x="40" y="5" width="5" height="5" fill="#b9bac2"/><rect x="45" y="5" width="5" height="5" fill="#bbc2cc"/><rect x="50" y="5" width="5" height="5" fill="#c8c7c8"/><rect x="55" y="5" width="5" height="5" fill="#bcc1c9"/><rect x="60" y="5" width="5" height="5" fill="#d6d0d1"/><rect x="65" y="5" width="5" height="5" fill="#dbe1ee"/><rect x="70" y="5" width="5" height="5" fill="#c5c5cb"/><rect x="75" y="5" width="5" height="5" fill="#777b87"/><rect x="80" y="5" width="5" height="5" fill="#c1c6d0"/><rect x="85" y="5" width="5" height="5" fill="#797c7f"/><rect x="90" y="5" width="5" height="5" fill="#d6dae4"/><rect x="95" y="5" width="5" height="5" fill="#cad2df"/><rect x="100" y="5" width="5" height="5" fill="#b7bfcb"/><rect x="105" y="5" width="5" height="5" fill="#c9cfda"/><rect x="110" y="5" width="5" height="5" fill="#a9a9aa"/><rect x="115" y="5" width="5" height="5" fill="#d3d4d9"/><rect x="120" y="5" width="5" height="5" fill="#d7d2cd"/><rect x="125" y="5" width="5" height="5" fill="#ccd2d8"/><rect x="130" y="5" width="5" height="5" fill="#c5c4ca"/><rect x="135" y="5" width="5" height="5" fill="#cdc8c8"/><rect x="140" y="5" width="5" height="5" fill="#d2cecd"/><rect x="145" y="5" width="5" height="5" fill="#d3d8df"/><rect x="150" y="5" width="5" height="5" fill="#c8c9d1"/><rect x="155" y="5" width="5" height="5" fill="#bdbfc4"/><rect x="160" y="5" width="5" height="5" fill="#757374"/><rect x="165" y="5" width="5" height="5" fill="#8a8586"/><rect x="170" y="5" width="5" height="5" fill="#cdcbc9"/><rect x="175" y="5" width="5" height="5" fill="#dee2ee"/><rect x="180" y="5" width="5" height="5" fill="#cacbd2"/><rect x="185" y="5" width="5" height="5" fill="#d2dae4"/><rect x="190" y="5" width="5" height="5" fill="#d9e1ea"/><rect x="195" y="5" width="5" height="5" fill="#c6cbd3"/><rect x="200" y="5" width="5" height="5" fill="#7d7772"/><rect x="205" y="5" width="5" height="5" fill="#abacad"/><rect x="210" y="5" width="5" height="5" fill="#d7d7df"/><rect x="215" y="5" width="5" height="5" fill="#97969d"/><rect x="220" y="5" width="5" height="5" fill="#c9cacb"/><rect x="225" y="5" width="5" height="5" fill="#d3d1d2"/><rect x="230" y="5" width="5" height="5" fill="#c3cbd9"/><rect x="235" y="5" width="5" height="5" fill="#999ba4"/><rect x="240" y="5" width="5" height="5" fill="#d7d8df"/><rect x="245" y="5" width="5" height="5" fill="#aba9ad"/><rect x="250" y="5" width="5" height="5" fill="#86858c"/><rect x="255" y="5" width="3" height="5" fill="#dbdde2"/></svg>
<svg class="a" style="left:158px;top:535px" width="261" height="10" viewBox="0 0 261 10" shape-rendering="crispEdges"><rect x="0" y="0" width="5" height="5" fill="#d3d8e4"/><rect x="5" y="0" width="5" height="5" fill="#dae1ea"/><rect x="10" y="0" width="5" height="5" fill="#c1bcb7"/><rect x="15" y="0" width="5" height="5" fill="#e0dedd"/><rect x="20" y="0" width="5" height="5" fill="#cbc3c2"/><rect x="25" y="0" width="5" height="5" fill="#e6e0dc"/><rect x="30" y="0" width="5" height="5" fill="#8b888b"/><rect x="35" y="0" width="5" height="5" fill="#d6d5da"/><rect x="40" y="0" width="5" height="5" fill="#ece6e3"/><rect x="45" y="0" width="5" height="5" fill="#d1d2d9"/><rect x="50" y="0" width="5" height="5" fill="#7d848f"/><rect x="55" y="0" width="5" height="5" fill="#dfdddb"/><rect x="60" y="0" width="5" height="5" fill="#8c9298"/><rect x="65" y="0" width="5" height="5" fill="#ece8e8"/><rect x="70" y="0" width="5" height="5" fill="#d0d8e4"/><rect x="75" y="0" width="5" height="5" fill="#ddd7d6"/><rect x="80" y="0" width="5" height="5" fill="#d5d8de"/><rect x="85" y="0" width="5" height="5" fill="#c7cad3"/><rect x="90" y="0" width="5" height="5" fill="#86888b"/><rect x="95" y="0" width="5" height="5" fill="#d4d8e2"/><rect x="100" y="0" width="5" height="5" fill="#a09fa2"/><rect x="105" y="0" width="5" height="5" fill="#dddfe8"/><rect x="110" y="0" width="5" height="5" fill="#c5c4c6"/><rect x="115" y="0" width="5" height="5" fill="#c5bdbd"/><rect x="120" y="0" width="5" height="5" fill="#88909f"/><rect x="125" y="0" width="5" height="5" fill="#dedfe1"/><rect x="130" y="0" width="5" height="5" fill="#dcd4ce"/><rect x="135" y="0" width="5" height="5" fill="#c6c8ca"/><rect x="140" y="0" width="5" height="5" fill="#cecece"/><rect x="145" y="0" width="5" height="5" fill="#dfdcdb"/><rect x="150" y="0" width="5" height="5" fill="#b0a9aa"/><rect x="155" y="0" width="5" height="5" fill="#d1d5e1"/><rect x="160" y="0" width="5" height="5" fill="#e6e1e0"/><rect x="165" y="0" width="5" height="5" fill="#e5e2e5"/><rect x="170" y="0" width="5" height="5" fill="#bebabc"/><rect x="175" y="0" width="5" height="5" fill="#d2d7dd"/><rect x="180" y="0" width="5" height="5" fill="#ccd0d4"/><rect x="185" y="0" width="5" height="5" fill="#e0e6f1"/><rect x="190" y="0" width="5" height="5" fill="#d3d2d3"/><rect x="195" y="0" width="5" height="5" fill="#dcd5d1"/><rect x="200" y="0" width="5" height="5" fill="#c3cad7"/><rect x="205" y="0" width="5" height="5" fill="#e3e5ee"/><rect x="210" y="0" width="5" height="5" fill="#cac6c7"/><rect x="215" y="0" width="5" height="5" fill="#bbc2d1"/><rect x="220" y="0" width="5" height="5" fill="#dbd5d7"/><rect x="225" y="0" width="5" height="5" fill="#d1cccd"/><rect x="230" y="0" width="5" height="5" fill="#dfe2e5"/><rect x="235" y="0" width="5" height="5" fill="#dfd9d5"/><rect x="240" y="0" width="5" height="5" fill="#d5d2d5"/><rect x="245" y="0" width="5" height="5" fill="#9299a2"/><rect x="250" y="0" width="5" height="5" fill="#8f8785"/><rect x="255" y="0" width="5" height="5" fill="#a9abaf"/><rect x="260" y="0" width="1" height="5" fill="#c5cbd6"/><rect x="0" y="5" width="5" height="5" fill="#d8d2ce"/><rect x="5" y="5" width="5" height="5" fill="#eee6e1"/><rect x="10" y="5" width="5" height="5" fill="#d4d0ce"/><rect x="15" y="5" width="5" height="5" fill="#cacacb"/><rect x="20" y="5" width="5" height="5" fill="#d1cbcd"/><rect x="25" y="5" width="5" height="5" fill="#e6e3e4"/><rect x="30" y="5" width="5" height="5" fill="#cbd1de"/><rect x="35" y="5" width="5" height="5" fill="#cccbcf"/><rect x="40" y="5" width="5" height="5" fill="#bab9be"/><rect x="45" y="5" width="5" height="5" fill="#e0d9d5"/><rect x="50" y="5" width="5" height="5" fill="#aca9aa"/><rect x="55" y="5" width="5" height="5" fill="#dfdad9"/><rect x="60" y="5" width="5" height="5" fill="#dadde2"/><rect x="65" y="5" width="5" height="5" fill="#7c828a"/><rect x="70" y="5" width="5" height="5" fill="#d9e1e9"/><rect x="75" y="5" width="5" height="5" fill="#ede5e4"/><rect x="80" y="5" width="5" height="5" fill="#89919f"/><rect x="85" y="5" width="5" height="5" fill="#858d9d"/><rect x="90" y="5" width="5" height="5" fill="#cdc5c5"/><rect x="95" y="5" width="5" height="5" fill="#cdd3dd"/><rect x="100" y="5" width="5" height="5" fill="#aeaaac"/><rect x="105" y="5" width="5" height="5" fill="#e6e9ef"/><rect x="110" y="5" width="5" height="5" fill="#838892"/><rect x="115" y="5" width="5" height="5" fill="#e2dad6"/><rect x="120" y="5" width="5" height="5" fill="#91949b"/><rect x="125" y="5" width="5" height="5" fill="#d0d2da"/><rect x="130" y="5" width="5" height="5" fill="#ede6e7"/><rect x="135" y="5" width="5" height="5" fill="#bab9bb"/><rect x="140" y="5" width="5" height="5" fill="#939ba4"/><rect x="145" y="5" width="5" height="5" fill="#808890"/><rect x="150" y="5" width="5" height="5" fill="#848a95"/><rect x="155" y="5" width="5" height="5" fill="#e5eaf2"/><rect x="160" y="5" width="5" height="5" fill="#898f99"/><rect x="165" y="5" width="5" height="5" fill="#c0bfc3"/><rect x="170" y="5" width="5" height="5" fill="#d8d8dc"/><rect x="175" y="5" width="5" height="5" fill="#ebeae9"/><rect x="180" y="5" width="5" height="5" fill="#b7b4b8"/><rect x="185" y="5" width="5" height="5" fill="#b6bcc6"/><rect x="190" y="5" width="5" height="5" fill="#d5d4d3"/><rect x="195" y="5" width="5" height="5" fill="#d2d5df"/><rect x="200" y="5" width="5" height="5" fill="#d0cfd1"/><rect x="205" y="5" width="5" height="5" fill="#a8aebb"/><rect x="210" y="5" width="5" height="5" fill="#d1cecc"/><rect x="215" y="5" width="5" height="5" fill="#9e9b9b"/><rect x="220" y="5" width="5" height="5" fill="#cdc9c8"/><rect x="225" y="5" width="5" height="5" fill="#a29fa1"/><rect x="230" y="5" width="5" height="5" fill="#e1e4ee"/><rect x="235" y="5" width="5" height="5" fill="#dcd6d3"/><rect x="240" y="5" width="5" height="5" fill="#c1c5cc"/><rect x="245" y="5" width="5" height="5" fill="#cccdd3"/><rect x="250" y="5" width="5" height="5" fill="#8c8e96"/><rect x="255" y="5" width="5" height="5" fill="#e0dbda"/><rect x="260" y="5" width="1" height="5" fill="#c3bfc2"/></svg>
<svg class="a" style="left:58px;top:479px" width="60" height="150" viewBox="58 479 60 150">
 <g fill="none" stroke-width="1.8">
 <path d="M66.5 483.5 L70.5 487.5 L66.5 491.5" stroke="#a0a0a0"/>
 <path d="M64.5 501.5 L68.5 505.5 L72.5 501.5" stroke="#3a3a3a"/>
 <path d="M86.5 517.5 L90.5 521.5 L86.5 525.5" stroke="#a0a0a0"/>
 <path d="M86.5 534.5 L90.5 538.5 L86.5 542.5" stroke="#a0a0a0"/>
 <path d="M66.5 568.5 L70.5 572.5 L66.5 576.5" stroke="#a0a0a0"/>
 <path d="M66.5 585.5 L70.5 589.5 L66.5 593.5" stroke="#a0a0a0"/>
 <path d="M64.5 603.5 L68.5 607.5 L72.5 603.5" stroke="#3a3a3a"/>
 <path d="M84.5 620.5 L88.5 624.5 L92.5 620.5" stroke="#3a3a3a"/>
 </g>
</svg>
<!-- details hscroll -->
<div class="a" style="left:59px;top:674px;width:760px;height:15px;background:#f0f0f0"></div>
<div class="a" style="left:76px;top:674px;width:544px;height:15px;background:#cdcdcd"></div>
<svg class="a" style="left:59px;top:674px" width="760" height="15" viewBox="59 674 760 15">
 <path d="M69 678 L65.5 681.5 L69 685" stroke="#555" stroke-width="1.9" fill="none"/>
 <path d="M808.5 678 L812 681.5 L808.5 685" stroke="#555" stroke-width="1.9" fill="none"/>
</svg>

<!-- hex pane -->
<div class="a" style="left:58px;top:696px;width:762px;height:98px;background:#fff;border-top:1px solid #8a8a8a;border-bottom:1px solid #8a8a8a"></div>
<div class="a" style="left:59px;top:697px;width:41px;height:95px;background:#f0f0f0"></div>
<div class="a mono" style="left:66px;top:700px;font-size:12.2px;letter-spacing:-0.32px;line-height:15px;color:#a0a0a0">0010
0020
0030
0040
0050
0060</div>
<div class="a mono" style="left:108px;top:700px;font-size:12.2px;letter-spacing:-0.32px;line-height:15px;color:#000">00 5e 48 95 00 00 35 06  86 f1 8e fa 66 6c c0 a8   <span class="g">·</span>^H<span class="g">···</span>5<span class="g">·</span> <span class="g">····</span>fl<span class="g">··</span>
00 05 02 4b e1 6e 9f a5  2c 31 11 dc a9 a4 50 18   <span class="g">···</span>K<span class="g">·</span>n<span class="g">··</span> ,1<span class="g">····</span>P<span class="g">·</span>
01 00 d2 2f 00 00 32 32  30 20 73 6d 74 70 2e 67   <span class="g">···</span>/<span class="g">··</span>22 0 smtp.g
6d 61 69 6c 2e 63 6f 6d  20 45 53 4d 54 50 20 62   mail.com  ESMTP b
6c 31 32 73 6d 31 39 38  34 35 38 39 65 6a 62 2e   l12sm198 4589ejb.
37 35 20 2d 20 67 73 6d  74 70 0d 0a               75 - gsm tp<span class="g">··</span></div>
<div class="a" style="left:59px;top:697px;width:760px;height:96px;border-top:1px dotted #000;border-left:1px dotted #000"></div>
<!-- hex vscroll -->
<div class="a" style="left:803px;top:697px;width:16px;height:95px;background:#f0f0f0"></div>
<div class="a" style="left:804px;top:720px;width:14px;height:56px;background:#cdcdcd"></div>
<svg class="a" style="left:803px;top:697px" width="16" height="95" viewBox="803 697 16 95">
 <path d="M807.5 708 L811 704.5 L814.5 708" stroke="#555" stroke-width="1.9" fill="none"/>
 <path d="M807.5 783 L811 786.5 L814.5 783" stroke="#555" stroke-width="1.9" fill="none"/>
</svg>
<!-- status bar -->
<svg class="a" style="left:66px;top:796px" width="42" height="18" viewBox="66 796 42 18">
 <defs><radialGradient id="yc" cx="0.4" cy="0.35" r="0.7"><stop offset="0" stop-color="#f4f29a"/><stop offset="1" stop-color="#d8d34a"/></radialGradient></defs>
 <circle cx="75" cy="805" r="6.5" fill="url(#yc)" stroke="#8d8a3a" stroke-width="0.9"/>
 <rect x="92" y="798.5" width="10.5" height="13" fill="#f4f4f4" stroke="#b8b8b8" stroke-width="0.8"/>
 <rect x="92.4" y="798.9" width="9.7" height="3" fill="#3a9ae0"/>
 <path d="M93.5 804 H99 M93.5 806.5 H97 M93.5 809 H100" stroke="#c8c8c8" stroke-width="0.8"/>
 <path d="M95.5 808 L103.5 800" stroke="#2a2a2a" stroke-width="2.2"/>
 <path d="M94.5 809 L96 806.8 L96.8 807.6 Z" fill="#111"/>
</svg>
<div class="a" style="left:119px;top:800px;font-size:10.6px;color:#000">wireshark_Ethernet 2FDAKH1.pcapng</div>
<div class="a" style="left:517px;top:797px;width:1px;height:17px;background:#a0a0a0"></div>
<div class="a" style="left:520px;top:797px;width:1px;height:17px;background:#a0a0a0"></div>
<div class="a" style="left:530px;top:800px;font-size:10.9px;color:#000">Packets: 4142 · Displayed: 5 (0.1%)</div>
<div class="a" style="left:711px;top:797px;width:1px;height:17px;background:#a0a0a0"></div>
<div class="a" style="left:714px;top:797px;width:1px;height:17px;background:#a0a0a0"></div>
<div class="a" style="left:724px;top:800px;font-size:10.9px;color:#000">Profile: Default</div>
<div class="a" style="left:802px;top:797px;width:1px;height:17px;background:#d0d0d0"></div>

<svg class="a" style="left:808px;top:805px" width="11" height="10" viewBox="808 805 11 10" shape-rendering="crispEdges"><g fill="#a8a8a8"><rect x="815" y="806" width="2" height="2"/><rect x="812" y="809" width="2" height="2"/><rect x="815" y="809" width="2" height="2"/><rect x="809" y="812" width="2" height="2"/><rect x="812" y="812" width="2" height="2"/><rect x="815" y="812" width="2" height="2"/></g></svg>
</body></html>
